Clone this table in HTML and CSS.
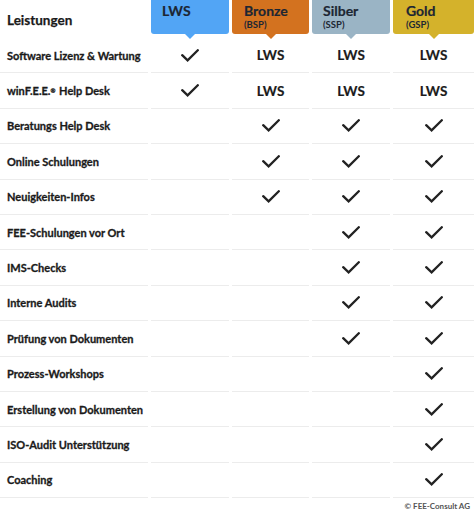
FILE: index.html
```html
<!DOCTYPE html>
<html lang="de">
<head>
<meta charset="utf-8">
<title>Leistungen</title>
<link rel="stylesheet" href="styles.css">
</head>
<body>
<svg width="0" height="0" class="defs">
  <symbol id="chk" viewBox="0 0 18 13"><path d="M1.2 6.2 L6.6 11.4 L16.8 1.2" fill="none" stroke="#222" stroke-width="2.3" stroke-linecap="round" stroke-linejoin="miter"/></symbol>
</svg>
<div class="table">
  <div class="hcell title">Leistungen</div>
  <div class="hcell"><div class="tag lws"><span class="name">LWS</span></div></div>
  <div class="hcell"><div class="tag bronze"><span class="name">Bronze</span><span class="code">(BSP)</span></div></div>
  <div class="hcell"><div class="tag silber"><span class="name">Silber</span><span class="code">(SSP)</span></div></div>
  <div class="hcell"><div class="tag gold"><span class="name">Gold</span><span class="code">(GSP)</span></div></div>

  <div class="cell label">Software Lizenz &amp; Wartung</div>
  <div class="cell"><svg class="check"><use href="#chk"/></svg></div>
  <div class="cell txt">LWS</div><div class="cell txt">LWS</div><div class="cell txt">LWS</div>

  <div class="cell label">winF.E.E.<sup>®</sup>&nbsp;Help Desk</div>
  <div class="cell"><svg class="check"><use href="#chk"/></svg></div>
  <div class="cell txt">LWS</div><div class="cell txt">LWS</div><div class="cell txt">LWS</div>

  <div class="cell label">Beratungs Help Desk</div>
  <div class="cell"></div>
  <div class="cell"><svg class="check"><use href="#chk"/></svg></div><div class="cell"><svg class="check"><use href="#chk"/></svg></div><div class="cell"><svg class="check"><use href="#chk"/></svg></div>

  <div class="cell label">Online Schulungen</div>
  <div class="cell"></div>
  <div class="cell"><svg class="check"><use href="#chk"/></svg></div><div class="cell"><svg class="check"><use href="#chk"/></svg></div><div class="cell"><svg class="check"><use href="#chk"/></svg></div>

  <div class="cell label">Neuigkeiten-Infos</div>
  <div class="cell"></div>
  <div class="cell"><svg class="check"><use href="#chk"/></svg></div><div class="cell"><svg class="check"><use href="#chk"/></svg></div><div class="cell"><svg class="check"><use href="#chk"/></svg></div>

  <div class="cell label">FEE-Schulungen vor Ort</div>
  <div class="cell"></div><div class="cell"></div>
  <div class="cell"><svg class="check"><use href="#chk"/></svg></div><div class="cell"><svg class="check"><use href="#chk"/></svg></div>

  <div class="cell label">IMS-Checks</div>
  <div class="cell"></div><div class="cell"></div>
  <div class="cell"><svg class="check"><use href="#chk"/></svg></div><div class="cell"><svg class="check"><use href="#chk"/></svg></div>

  <div class="cell label">Interne Audits</div>
  <div class="cell"></div><div class="cell"></div>
  <div class="cell"><svg class="check"><use href="#chk"/></svg></div><div class="cell"><svg class="check"><use href="#chk"/></svg></div>

  <div class="cell label">Prüfung von Dokumenten</div>
  <div class="cell"></div><div class="cell"></div>
  <div class="cell"><svg class="check"><use href="#chk"/></svg></div><div class="cell"><svg class="check"><use href="#chk"/></svg></div>

  <div class="cell label">Prozess-Workshops</div>
  <div class="cell"></div><div class="cell"></div><div class="cell"></div>
  <div class="cell"><svg class="check"><use href="#chk"/></svg></div>

  <div class="cell label">Erstellung von Dokumenten</div>
  <div class="cell"></div><div class="cell"></div><div class="cell"></div>
  <div class="cell"><svg class="check"><use href="#chk"/></svg></div>

  <div class="cell label">ISO-Audit Unterstützung</div>
  <div class="cell"></div><div class="cell"></div><div class="cell"></div>
  <div class="cell"><svg class="check"><use href="#chk"/></svg></div>

  <div class="cell label">Coaching</div>
  <div class="cell"></div><div class="cell"></div><div class="cell"></div>
  <div class="cell"><svg class="check"><use href="#chk"/></svg></div>
</div>
<div class="footer">© FEE-Consult AG</div>
</body>
</html>
```

FILE: styles.css
```css
html, body {
  margin: 0;
  padding: 0;
  background: #fff;
}
body {
  width: 474px;
  height: 513px;
  overflow: hidden;
  font-family: Lato, "Open Sans", sans-serif;
  font-weight: 700;
  color: #1f1f1f;
}
.defs {
  position: absolute;
  width: 0;
  height: 0;
}
.table {
  display: grid;
  grid-template-columns: 148px 78px 77px 78px 81px;
  column-gap: 3px;
  grid-template-rows: 38px;
  grid-auto-rows: 35.4px;
}
.hcell {
  position: relative;
}
.title {
  font-size: 13.5px;
  padding-left: 7px;
  padding-top: 12px;
  box-sizing: border-box;
  color: #1a1a1a;
  -webkit-text-stroke: 0.25px #1a1a1a;
}
.tag {
  position: relative;
  height: 34px;
  border-radius: 0 0 3px 3px;
  box-sizing: border-box;
  padding: 3px 0 0 11px;
  display: flex;
  flex-direction: column;
  color: #1c2633;
}
.tag::after {
  content: "";
  position: absolute;
  left: 50%;
  bottom: -5px;
  margin-left: -5px;
  border-left: 5px solid transparent;
  border-right: 5px solid transparent;
  border-top: 5px solid var(--c);
}
.lws { background: #52a5f5; --c: #52a5f5; }
.bronze { background: #d3721f; --c: #d3721f; padding-left: 12px; }
.silber { background: #9ab4c5; --c: #9ab4c5; }
.gold { background: #d4b22b; --c: #d4b22b; padding-left: 13px; }
.name {
  font-size: 14px;
  line-height: 16px;
  -webkit-text-stroke: 0.2px #1c2633;
}
.code {
  font-size: 9.5px;
  line-height: 11px;
  margin-top: 0;
}
.cell {
  border-bottom: 1px solid #ececec;
  display: flex;
  align-items: center;
  justify-content: center;
  box-sizing: border-box;
}
.label {
  justify-content: flex-start;
  padding-left: 7px;
  font-size: 11px;
  color: #1a1a1a;
  white-space: nowrap;
  -webkit-text-stroke: 0.3px #1a1a1a;
}
.label sup {
  font-size: 6px;
  vertical-align: 4px;
  line-height: 0;
  margin-right: 1px;
}
.txt {
  font-size: 13.5px;
  color: #1a1a1a;
  -webkit-text-stroke: 0.2px #1a1a1a;
}
.check {
  width: 18px;
  height: 13px;
}
.footer {
  text-align: right;
  padding-right: 4px;
  padding-top: 2px;
  font-size: 8px;
  line-height: 13px;
  color: #555;
}
```
